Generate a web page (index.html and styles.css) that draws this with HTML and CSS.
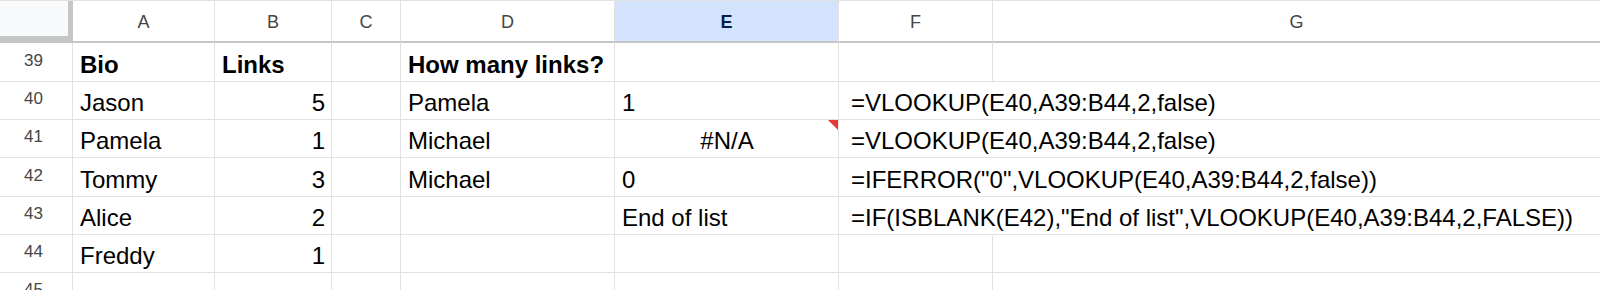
FILE: index.html
```html
<!DOCTYPE html>
<html>
<head>
<meta charset="utf-8">
<link rel="stylesheet" href="styles.css">
</head>
<body>
<div class="sheet">
  <div class="corner"></div>
  <div class="hd">A</div>
  <div class="hd">B</div>
  <div class="hd">C</div>
  <div class="hd">D</div>
  <div class="hd sel">E</div>
  <div class="hd">F</div>
  <div class="hd last">G</div>

  <div class="rn">39</div>
  <div class="c b">Bio</div>
  <div class="c b">Links</div>
  <div class="c"></div>
  <div class="c b">How many links?</div>
  <div class="c"></div>
  <div class="c"></div>
  <div class="c last"></div>

  <div class="rn">40</div>
  <div class="c">Jason</div>
  <div class="c r">5</div>
  <div class="c"></div>
  <div class="c">Pamela</div>
  <div class="c">1</div>
  <div class="c f ovf">=VLOOKUP(E40,A39:B44,2,false)</div>
  <div class="c last"></div>

  <div class="rn">41</div>
  <div class="c">Pamela</div>
  <div class="c r">1</div>
  <div class="c"></div>
  <div class="c">Michael</div>
  <div class="c ctr err">#N/A</div>
  <div class="c f ovf">=VLOOKUP(E40,A39:B44,2,false)</div>
  <div class="c last"></div>

  <div class="rn">42</div>
  <div class="c">Tommy</div>
  <div class="c r">3</div>
  <div class="c"></div>
  <div class="c">Michael</div>
  <div class="c">0</div>
  <div class="c f ovf">=IFERROR("0",VLOOKUP(E40,A39:B44,2,false))</div>
  <div class="c last"></div>

  <div class="rn">43</div>
  <div class="c">Alice</div>
  <div class="c r">2</div>
  <div class="c"></div>
  <div class="c"></div>
  <div class="c">End of list</div>
  <div class="c f ovf">=IF(ISBLANK(E42),"End of list",VLOOKUP(E40,A39:B44,2,FALSE))</div>
  <div class="c last"></div>

  <div class="rn">44</div>
  <div class="c">Freddy</div>
  <div class="c r">1</div>
  <div class="c"></div>
  <div class="c"></div>
  <div class="c"></div>
  <div class="c"></div>
  <div class="c last"></div>

  <div class="rn">45</div>
  <div class="c"></div>
  <div class="c"></div>
  <div class="c"></div>
  <div class="c"></div>
  <div class="c"></div>
  <div class="c"></div>
  <div class="c last"></div>
</div>
</body>
</html>
```

FILE: styles.css
```css
* { box-sizing: border-box; }
html, body {
  margin: 0;
  padding: 0;
  background: #ffffff;
  overflow: hidden;
}
body {
  width: 1600px;
  height: 290px;
}
.sheet {
  display: grid;
  grid-template-columns: 73px 142px 117px 69px 214px 224px 154px 607px;
  grid-template-rows: 42px 39px 38px 38px 39px 38px 38px 38px;
  border-top: 1px solid #e1e1e1;
  font-family: "Liberation Sans", Arial, sans-serif;
  color: #000000;
}
.corner {
  background: #f8f9fa;
  border-right: 5px solid #c4c7c5;
  border-bottom: 7px solid #c4c7c5;
}
.hd {
  display: flex;
  align-items: center;
  justify-content: center;
  padding-top: 3px;
  font-family: "Liberation Sans", Arial, sans-serif;
  font-size: 18px;
  color: #444746;
  border-right: 1px solid #e1e1e1;
  border-bottom: 2px solid #c4c7c5;
  background: #ffffff;
}
.hd.sel {
  background: #d3e3fd;
  color: #041e49;
  font-weight: 700;
}
.rn {
  display: flex;
  align-items: flex-end;
  justify-content: center;
  padding: 0 5px 10px 0;
  font-family: "Liberation Sans", Arial, sans-serif;
  font-size: 17px;
  color: #444746;
  border-right: 1px solid #e1e1e1;
  border-bottom: 1px solid #e1e1e1;
}
.c {
  display: flex;
  align-items: flex-end;
  padding: 0 6px 2px 7px;
  font-size: 24px;
  white-space: nowrap;
  border-right: 1px solid #e1e1e1;
  border-bottom: 1px solid #e1e1e1;
  min-width: 0;
}
.c.b { font-weight: 700; }
.c.r { justify-content: flex-end; }
.c.ctr { justify-content: center; }
.c.f { padding-left: 12px; }
.c.ovf {
  overflow: visible;
  border-right-color: transparent;
}
.last { border-right: none; }
.err { position: relative; }
.err::after {
  content: "";
  position: absolute;
  top: 0;
  right: 0;
  width: 0;
  height: 0;
  border-top: 10px solid #e53935;
  border-left: 10px solid transparent;
}
```
